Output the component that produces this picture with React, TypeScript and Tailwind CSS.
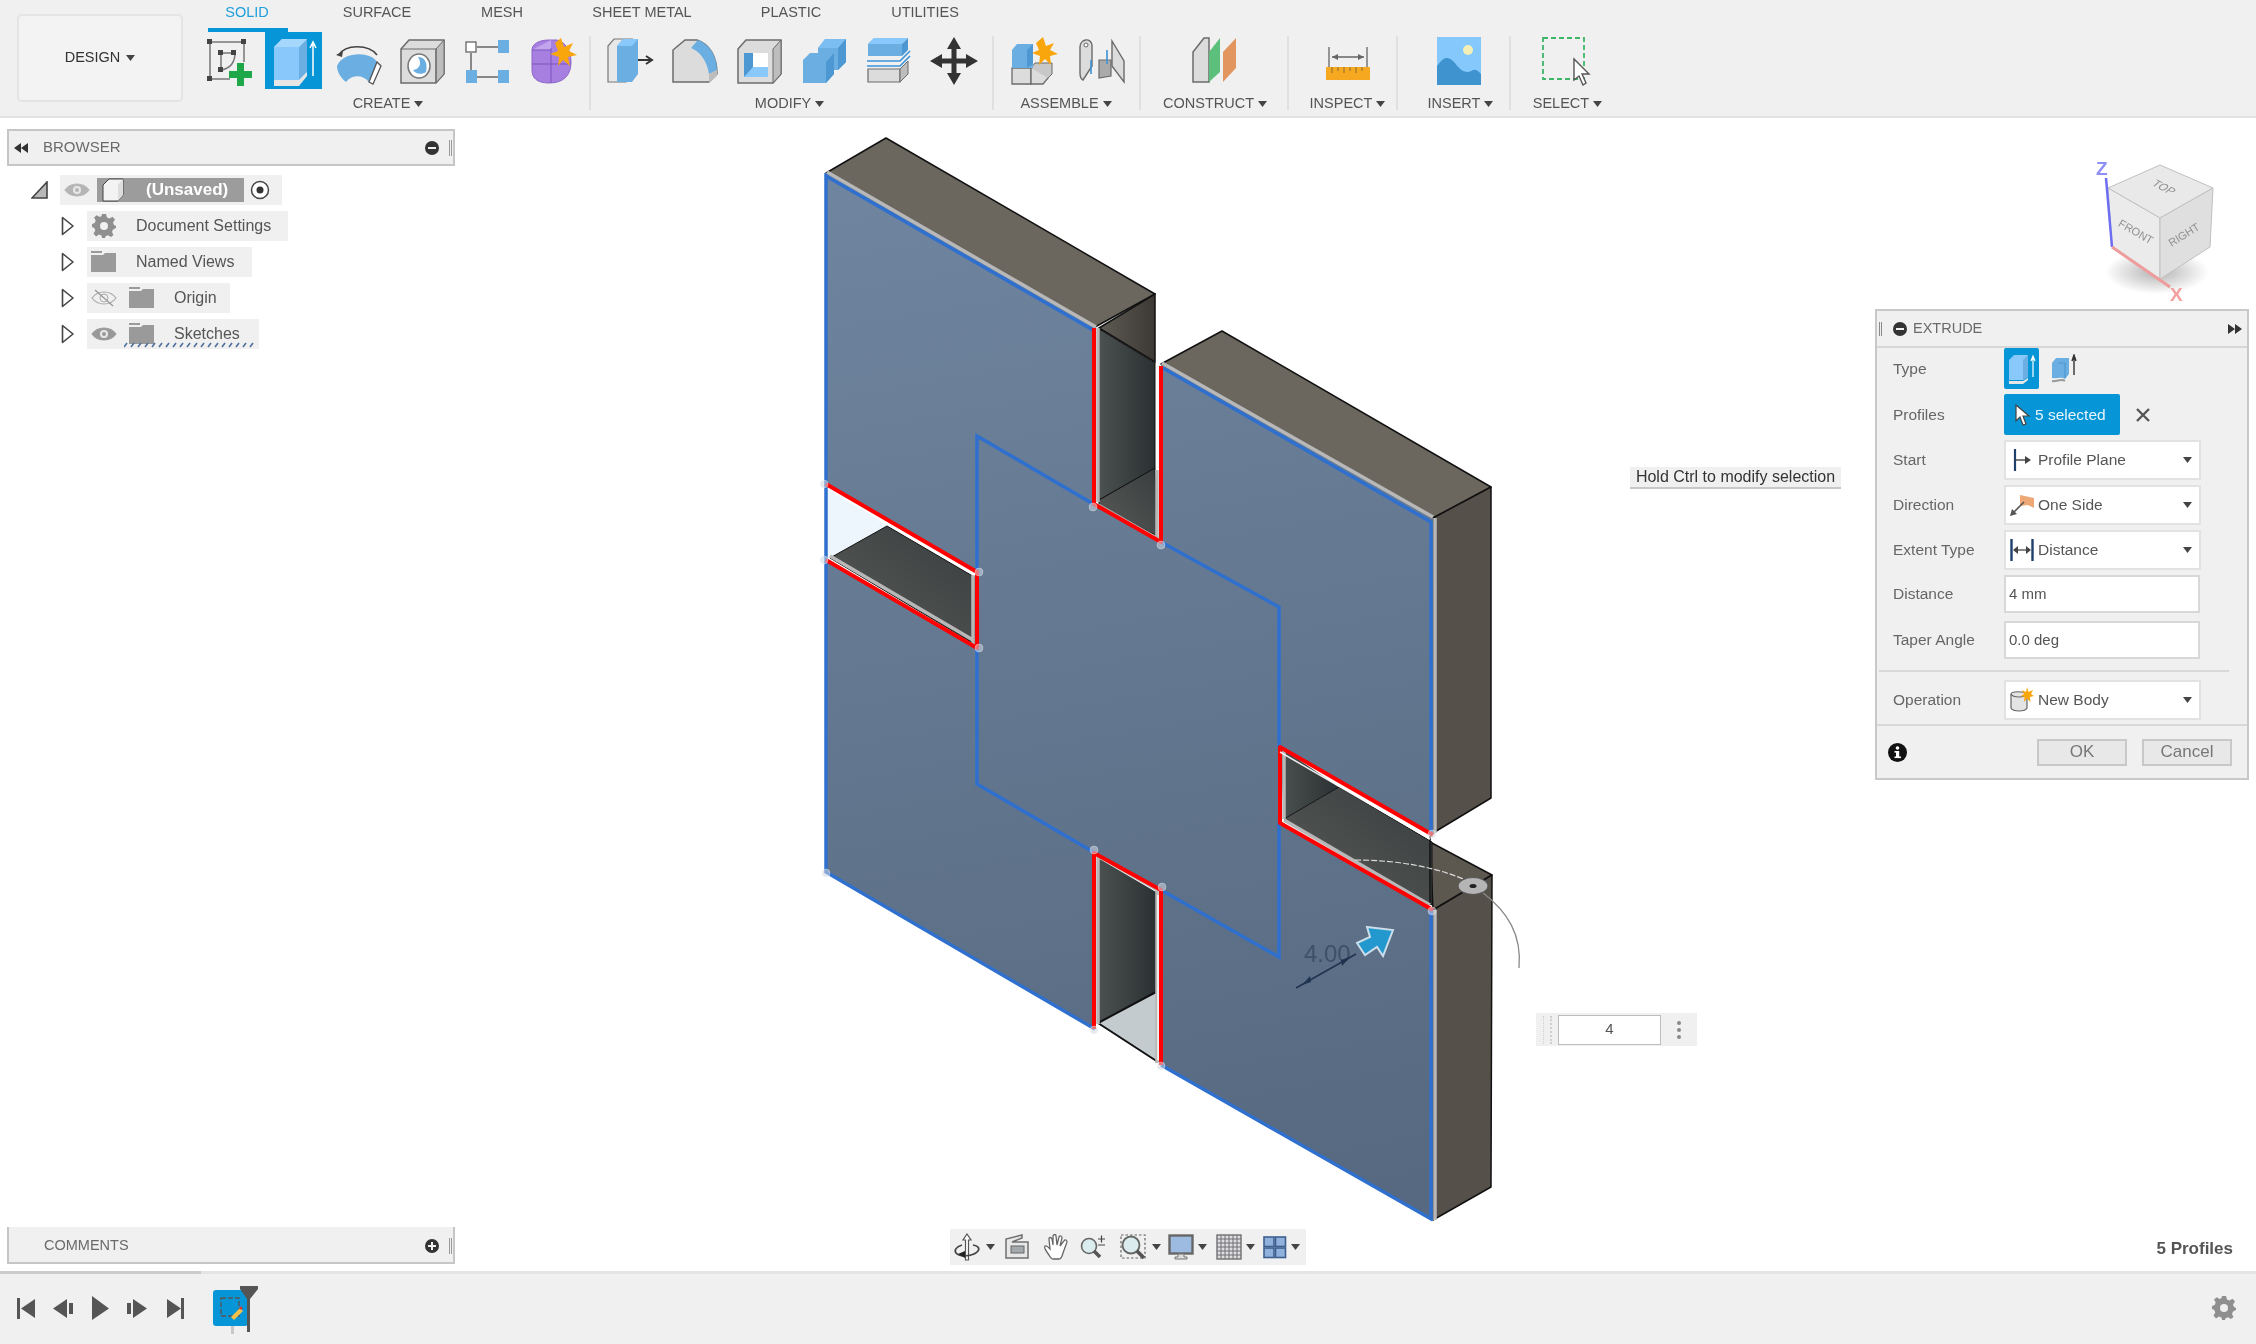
import * as React from "react";

function Caret({ className = "" }: { className?: string }) {
  return (
    <svg width="9" height="6" viewBox="0 0 9 6" className={className}>
      <path d="M0 0H9L4.5 6Z" fill="#444" />
    </svg>
  );
}

function Icon({ children, size = 50 }: { children: React.ReactNode; size?: number }) {
  return (
    <svg width={size} height={size} viewBox="0 0 50 50">
      {children}
    </svg>
  );
}

const BLUE = "#6aaee2";
const LIGHT = "#88c8fb";
const MID = "#4d98d2";
const GREY = "#dcdcdc";
const LINE = "#6b6b6b";

const IconSketch = () => (
  <Icon>
    <path d="M6 6H40M6 6V43M6 43H26M40 6V26" stroke="#777" strokeWidth="1.5" fill="none" />
    <path d="M17 17H30M17 17V33M31 17C31 26 26 32 18 34" stroke="#777" strokeWidth="1.5" fill="none" />
    {[[3, 3], [37, 3], [3, 40], [14, 14], [27, 14], [14, 31]].map(([x, y], i) => (
      <rect key={i} x={x} y={y} width="5" height="5" fill="#444" />
    ))}
    <path d="M33 27H40V35H48V42H40V50H33V42H25V35H33Z" fill="#1fa84a" />
  </Icon>
);

const IconExtrude = () => (
  <Icon>
    <path d="M5 11L13 3H38V38L30 46H5Z" fill={LIGHT} />
    <path d="M30 11L38 3V36L30 44Z" fill={BLUE} />
    <path d="M5 11L13 3H38L30 11Z" fill="#a6d8fd" />
    <path d="M5 44H30L38 36V40L30 50H5Z" fill="#e6e6e6" />
    <path d="M44 40V8M41 12L44 6L47 12" stroke="#fff" strokeWidth="1.5" fill="none" />
  </Icon>
);

const IconRevolve = () => (
  <Icon>
    <path d="M6 19C12 8 36 8 44 19" stroke="#444" strokeWidth="1.6" fill="none" />
    <path d="M3 19L10 15L9 21Z" fill="#444" />
    <path d="M4 30C10 15 38 15 44 26L36 46C30 39 20 38 13 46C8 42 4 36 4 30Z" fill={BLUE} />
    <path d="M44 26L48 30L40 48L36 46Z" fill="#fff" stroke="#555" strokeWidth="1.3" />
  </Icon>
);

const IconHole = () => (
  <Icon>
    <path d="M3 13L11 4H46V38L38 47H3Z" fill={GREY} stroke={LINE} strokeWidth="1.5" />
    <path d="M38 13L46 4V38L38 47Z" fill="#bdbdbd" stroke={LINE} strokeWidth="1" />
    <path d="M3 13H38V47" stroke={LINE} strokeWidth="1.2" fill="none" />
    <ellipse cx="21" cy="30" rx="11" ry="12" fill="#fff" stroke="#777" strokeWidth="1.5" />
    <path d="M20 21C27 21 30 27 28 36C24 39 17 38 15 34C22 33 24 27 20 21Z" fill={BLUE} />
  </Icon>
);

const IconPattern = () => (
  <Icon>
    <rect x="4" y="6" width="10" height="10" fill="#fff" stroke="#666" strokeWidth="1.3" />
    <rect x="36" y="4" width="11" height="13" fill={BLUE} />
    <rect x="4" y="34" width="11" height="13" fill={BLUE} />
    <rect x="36" y="34" width="11" height="13" fill={BLUE} />
    <path d="M15 11H36M9 17V34M15 41H36" stroke="#666" strokeWidth="1.5" />
  </Icon>
);

const IconForm = () => (
  <Icon>
    <path d="M5 14C5 8 12 4 22 4H30C38 6 44 14 44 26C44 40 36 47 22 47C10 47 5 42 5 34Z" fill="#a67fe0" stroke="#8d66c9" strokeWidth="1" />
    <path d="M5 14H24V4" fill="#c3a5ee" />
    <path d="M5 28H44M24 12V47M5 14H24" stroke="#7d55bd" strokeWidth="1" fill="none" />
    <path d="M34 2L37 11L46 7L42 15L50 19L41 21L43 30L36 24L31 30L32 21L23 18L31 15L28 7Z" fill="#f9a50c" />
  </Icon>
);

const IconPressPull = () => (
  <Icon>
    <path d="M2 46V10L8 3H26L20 10V46Z" fill="#e8e8e8" stroke="#777" strokeWidth="1.2" />
    <path d="M11 46V10L17 3H32V38L26 46Z" fill={BLUE} />
    <path d="M11 10L17 3H32L26 10Z" fill={LIGHT} />
    <path d="M32 24H44M40 20L46 24L40 28" stroke="#333" strokeWidth="2" fill="none" />
  </Icon>
);

const IconFillet = () => (
  <Icon>
    <path d="M2 46V14L14 4H26C38 8 46 20 46 38L38 46Z" fill={GREY} stroke={LINE} strokeWidth="1.5" />
    <path d="M20 12L27 4C38 8 46 20 46 34L38 38C36 26 30 16 20 12Z" fill={BLUE} />
    <path d="M38 38L46 34V40L38 47Z" fill="#bdbdbd" />
  </Icon>
);

const IconShell = () => (
  <Icon>
    <path d="M3 13L11 4H46V38L38 47H3Z" fill={GREY} stroke={LINE} strokeWidth="1.5" />
    <path d="M38 13L46 4V38L38 47Z" fill="#bdbdbd" stroke={LINE} strokeWidth="1" />
    <rect x="9" y="17" width="24" height="24" fill="#fff" />
    <path d="M9 17H18V31H33V41H9Z" fill={MID} />
    <path d="M18 31H33V41H9Z" fill={LIGHT} />
  </Icon>
);

const IconCombine = () => (
  <Icon>
    <path d="M18 12L25 3H46V26L38 34H34V38L26 47H3V24L10 17H18Z" fill={BLUE} />
    <path d="M18 12L25 3H46L38 12Z" fill={LIGHT} opacity="0.6" />
    <path d="M38 12L46 3V26L38 34Z" fill={MID} />
    <path d="M26 26L34 17V38L26 47Z" fill={MID} />
  </Icon>
);

const IconOffset = () => (
  <Icon>
    <path d="M4 8L10 2H42L38 8V20L4 20Z" fill={BLUE} />
    <path d="M4 8L10 2H44L38 8Z" fill={LIGHT} />
    <path d="M38 8L44 2V14L38 20Z" fill={MID} />
    <path d="M3 25H36L46 15" stroke="#3b93d8" strokeWidth="1.6" fill="none" />
    <path d="M3 30H36L46 20" stroke="#3b93d8" strokeWidth="1.6" fill="none" />
    <path d="M4 33H36V46H4Z" fill={GREY} stroke={LINE} strokeWidth="1.2" />
    <path d="M36 33L44 25V38L36 46Z" fill="#bdbdbd" stroke={LINE} strokeWidth="1" />
  </Icon>
);

const IconMove = () => (
  <Icon>
    <path d="M25 1L32 13H27.5V22.5H37V18L49 25L37 32V27.5H27.5V37H32L25 49L18 37H22.5V27.5H13V32L1 25L13 18V22.5H22.5V13H18Z" fill="#333" />
  </Icon>
);

const IconComponent = () => (
  <Icon>
    <path d="M3 32H22V48H3Z" fill={GREY} stroke={LINE} strokeWidth="1.3" />
    <path d="M22 32H39V42L34 48H22Z" fill={GREY} stroke={LINE} strokeWidth="1.3" />
    <path d="M22 32L26 27H43V38L39 42" fill="#c8c8c8" stroke={LINE} strokeWidth="1" />
    <path d="M3 14L8 8H24V32H3Z" fill={BLUE} />
    <path d="M18 14L24 8V28L18 32Z" fill={MID} />
    <path d="M34 1L37 10L45 7L41 14L49 18L41 20L42 29L36 23L30 29L31 20L23 17L30 14L27 7Z" fill="#f9a50c" />
  </Icon>
);

const IconJoint = () => (
  <Icon>
    <path d="M3 37V11C3 3 14 1 15 9V30L6 44C4 43 3 41 3 37Z" fill={GREY} stroke={LINE} strokeWidth="1.4" />
    <circle cx="9" cy="9" r="2" fill="#fff" stroke="#666" />
    <path d="M35 5L47 25V46L35 30Z" fill={GREY} stroke={LINE} strokeWidth="1.4" />
    <path d="M22 24L34 24V40L22 42Z" fill="#aaa" stroke={LINE} strokeWidth="1.2" />
    <path d="M14 24V38M30 14V28" stroke="#3b93d8" strokeWidth="1.6" />
  </Icon>
);

const IconConstruct = () => (
  <Icon>
    <path d="M3 46V16L14 2H19V46Z" fill={GREY} stroke={LINE} strokeWidth="1.5" />
    <path d="M19 46V16L30 2V36Z" fill="#5cc07c" />
    <path d="M33 46V16L46 2V32Z" fill="#e39560" />
  </Icon>
);

const IconInspect = () => (
  <Icon>
    <path d="M6 11V31M44 11V31M9 21H41" stroke="#666" strokeWidth="1.3" fill="none" />
    <path d="M9 21L15 18V24ZM41 21L35 18V24Z" fill="#666" />
    <rect x="3" y="31" width="44" height="13" fill="#f6a821" />
    <path d="M9 31V37M15 31V35M21 31V37M27 31V35M33 31V37M39 31V35" stroke="#8a6d2c" strokeWidth="1" />
  </Icon>
);

const IconInsert = () => (
  <Icon>
    <rect x="3" y="1" width="44" height="48" fill="#85c8fb" />
    <circle cx="34" cy="14" r="5" fill="#f3efb7" />
    <path d="M3 30C10 20 14 20 20 26C24 31 28 36 34 36C39 36 40 30 47 38V49H3Z" fill="#3f93ce" />
  </Icon>
);

const IconSelect = () => (
  <Icon>
    <rect x="2" y="2" width="41" height="41" fill="none" stroke="#3fb56a" strokeWidth="1.8" strokeDasharray="5 3" />
    <path d="M33 26V47L38 43L42 52L45 50L41 41H48Z" fill="#fff" stroke="#555" strokeWidth="1.4" transform="translate(0 -3)" />
  </Icon>
);

function Slot({ children, className = "w-[64.5px]" }: { children: React.ReactNode; className?: string }) {
  return <div className={`flex h-[57px] shrink-0 items-center justify-center ${className}`}>{children}</div>;
}

function Group({
  label,
  className,
  rowClass = "",
  labelClass = "",
  children,
  last,
}: {
  label: string;
  className: string;
  rowClass?: string;
  labelClass?: string;
  children: React.ReactNode;
  last?: boolean;
}) {
  return (
    <div className={`relative flex shrink-0 flex-col ${className}`}>
      <div className={`flex h-[57px] justify-center ${rowClass}`}>{children}</div>
      <div className={`mt-[5px] flex h-[20px] items-center justify-center gap-[4px] text-[14.5px] text-[#555] ${labelClass}`}>
        {label}
        <Caret />
      </div>
      {!last && <div className="absolute right-0 top-[4px] h-[74px] w-[2px] bg-[#e0e0e0]" />}
    </div>
  );
}

function Toolbar() {
  const tabs = [
    ["SOLID", "w-[102px] text-[#1f9fdc]"],
    ["SURFACE", "w-[158px] text-[#555]"],
    ["MESH", "w-[92px] text-[#555]"],
    ["SHEET METAL", "w-[188px] text-[#555]"],
    ["PLASTIC", "w-[110px] text-[#555]"],
    ["UTILITIES", "w-[158px] text-[#555]"],
  ];
  return (
    <header className="flex h-[118px] shrink-0 border-b-2 border-[#e2e2e2] bg-[#f0f0f0]">
      <div className="ml-[17px] mt-[14px] flex h-[88px] w-[166px] items-center justify-center gap-[6px] rounded-[5px] border-2 border-[#e4e4e4] bg-[#f3f3f3] text-[14.5px] text-[#333]">
        DESIGN
        <Caret />
      </div>
      <div className="ml-[13px] flex flex-col">
        <div className="flex h-[28px] items-start pt-[2px] text-[14.5px] leading-[20px]">
          {tabs.map(([t, c]) => (
            <div key={t} className={`text-center ${c}`}>
              {t}
            </div>
          ))}
        </div>
        <div className="ml-[12px] h-[4px] w-[80px] bg-[#0696d7]" />
        <div className="flex">
          <Group label="CREATE" className="w-[395px]" rowClass="pr-[6px]" labelClass="pr-[11px]">
            <Slot><IconSketch /></Slot>
            <Slot>
              <div className="flex h-[57px] w-[57px] items-center justify-center bg-[#0696d7]"><IconExtrude /></div>
            </Slot>
            <Slot><IconRevolve /></Slot>
            <Slot><IconHole /></Slot>
            <Slot><IconPattern /></Slot>
            <Slot><IconForm /></Slot>
          </Group>
          <Group label="MODIFY" className="w-[403px]" labelClass="pr-[6px]">
            <Slot><IconPressPull /></Slot>
            <Slot><IconFillet /></Slot>
            <Slot><IconShell /></Slot>
            <Slot><IconCombine /></Slot>
            <Slot><IconOffset /></Slot>
            <Slot><IconMove /></Slot>
          </Group>
          <Group label="ASSEMBLE" className="w-[147px]" labelClass="pr-[3px]">
            <Slot className="w-[68px]"><IconComponent /></Slot>
            <Slot className="w-[68px]"><IconJoint /></Slot>
          </Group>
          <Group label="CONSTRUCT" className="w-[148px]">
            <Slot><IconConstruct /></Slot>
          </Group>
          <Group label="INSPECT" className="w-[109px]" labelClass="pl-[8px]">
            <Slot className="w-[64.5px] translate-x-[4px]"><IconInspect /></Slot>
          </Group>
          <Group label="INSERT" className="w-[113px]" labelClass="pl-[12px]">
            <Slot className="w-[64.5px] translate-x-[4px]"><IconInsert /></Slot>
          </Group>
          <Group label="SELECT" className="w-[109px]" labelClass="pl-[4px]" last>
            <Slot><IconSelect /></Slot>
          </Group>
        </div>
      </div>
    </header>
  );
}

function Eye({ off, faint }: { off?: boolean; faint?: boolean }) {
  const c = faint ? "#b5b5b5" : "#999";
  return (
    <svg width="26" height="20" viewBox="0 0 26 20">
      <path d="M1 10C7 2 19 2 25 10C19 18 7 18 1 10Z" fill={off ? "none" : c} stroke={off ? "#aaa" : c} strokeWidth="1.2" />
      <circle cx="13" cy="10" r="4" fill={off ? "none" : "#e8e8e8"} stroke={off ? "#aaa" : "none"} />
      {!off && <circle cx="13" cy="10" r="2" fill={c} />}
      {off && <path d="M4 2L22 18" stroke="#999" strokeWidth="1.3" />}
    </svg>
  );
}

function Folder() {
  return (
    <svg width="25" height="22" viewBox="0 0 25 22">
      <path d="M0 0H11V2H0ZM0 4H12L14 2H25V21H0Z" fill="#9a9a9a" />
    </svg>
  );
}

function Gear() {
  return (
    <svg width="24" height="24" viewBox="0 0 24 24">
      <path
        d="M10 0H14L15 3.5L17.5 4.6L20.5 2.7L23 5.5L21 8.5L22 11L24 12V14L21 15.5L20 18L21.5 21L19 23L16 21.3L13.5 22.3L13 24H10L9.5 21.5L7 20.5L4 22.5L1.5 19.5L3.3 16.5L2.3 14L0 13V10L2.7 9L3.7 6.5L2 3.5L4.8 1.2L7.7 3L9.5 2Z"
        fill="#8f8f8f"
      />
      <circle cx="12" cy="12" r="4" fill="#f0f0f0" />
    </svg>
  );
}

function TreeArrow() {
  return (
    <svg width="14" height="20" viewBox="0 0 14 20" className="shrink-0">
      <path d="M1.5 1.5L12 10L1.5 18.5Z" fill="#fff" stroke="#444" strokeWidth="1.6" strokeLinejoin="round" />
    </svg>
  );
}

function TreeRow({ className, textClass, children, label }: { className: string; textClass: string; children: React.ReactNode; label: string }) {
  return (
    <div className="flex h-[36px] items-center">
      <div className="ml-[61px] w-[26px]"><TreeArrow /></div>
      <div className={`relative flex h-[30px] items-center bg-[#f0f0f0] ${className}`}>
        {children}
        <span className={`text-[16px] text-[#555] ${textClass}`}>{label}</span>
      </div>
    </div>
  );
}

function Browser() {
  return (
    <div className="absolute left-[7px] top-[11px] w-[448px]">
      <div className="flex h-[37px] items-center border-2 border-[#c6c6c6] bg-[#f0f0f0]">
        <svg width="16" height="10" viewBox="0 0 16 10" className="ml-[5px]">
          <path d="M0 5L7 0V10ZM7 5L14 0V10Z" fill="#333" />
        </svg>
        <span className="ml-[13px] text-[15px] text-[#6a6a6a]">BROWSER</span>
        <div className="ml-auto mr-[1px] flex items-center gap-[10px]">
          <svg width="14" height="14" viewBox="0 0 14 14">
            <circle cx="7" cy="7" r="7" fill="#333" />
            <rect x="3" y="6" width="8" height="2" fill="#f0f0f0" />
          </svg>
          <div className="h-[16px] w-[3px] border-x border-[#9a9a9a]" />
        </div>
      </div>
      <div className="ml-[24px] mt-[9px] flex h-[30px] items-center">
        <svg width="17" height="18" viewBox="0 0 17 18">
          <path d="M1 17L16 1V17Z" fill="#b9b9b9" stroke="#444" strokeWidth="1.6" />
        </svg>
        <div className="ml-[12px] flex h-[30px] w-[222px] items-center bg-[#f0f0f0]">
          <div className="ml-[4px]"><Eye faint /></div>
          <div className="relative ml-[7px] flex h-[24px] w-[147px] items-center bg-[#9c9c9c]">
            <svg width="24" height="24" viewBox="0 0 24 24" className="absolute left-[4px] top-0">
              <path d="M2 23V7L8 1H22V17L17 23Z" fill="#f3f3f3" stroke="#444" strokeWidth="1" />
              <path d="M17 7L22 1V17L17 23Z" fill="#ddd" />
            </svg>
            <span className="ml-[49px] text-[17px] font-bold text-white">(Unsaved)</span>
          </div>
          <svg width="20" height="20" viewBox="0 0 20 20" className="ml-[6px]">
            <circle cx="10" cy="10" r="8.5" fill="#fff" stroke="#444" strokeWidth="1.5" />
            <circle cx="10" cy="10" r="3.5" fill="#333" />
          </svg>
        </div>
      </div>
      <div className="mt-[3px] -translate-x-[7px]">
        <TreeRow className="w-[201px]" textClass="ml-[20px]" label="Document Settings">
          <div className="ml-[5px]"><Gear /></div>
        </TreeRow>
        <TreeRow className="w-[165px]" textClass="ml-[20px]" label="Named Views">
          <div className="ml-[4px]"><Folder /></div>
        </TreeRow>
        <TreeRow className="w-[143px]" textClass="ml-[20px]" label="Origin">
          <div className="ml-[4px]"><Eye off /></div>
          <div className="ml-[12px]"><Folder /></div>
        </TreeRow>
        <TreeRow className="w-[172px]" textClass="ml-[20px]" label="Sketches">
          <div className="ml-[4px]"><Eye /></div>
          <div className="ml-[12px]"><Folder /></div>
          <svg width="132" height="6" viewBox="0 0 132 6" className="absolute left-[37px] top-[23px]">
            <path d="M0 5L3 1M7 5L10 1M14 5L17 1M21 5L24 1M28 5L31 1M35 5L38 1M42 5L45 1M49 5L52 1M56 5L59 1M63 5L66 1M70 5L73 1M77 5L80 1M84 5L87 1M91 5L94 1M98 5L101 1M105 5L108 1M112 5L115 1M119 5L122 1M126 5L129 1" stroke="#4e6f9e" strokeWidth="1.6" />
          </svg>
        </TreeRow>
      </div>
    </div>
  );
}

function Comments() {
  return (
    <div className="absolute bottom-[7px] left-[7px] flex h-[37px] w-[448px] items-center border-x-2 border-b-2 border-[#c6c6c6] bg-[#f0f0f0]">
      <span className="ml-[35px] pt-[2px] text-[14.5px] text-[#6a6a6a]">COMMENTS</span>
      <div className="ml-auto mr-[1px] flex items-center gap-[10px] pt-[2px]">
        <svg width="14" height="14" viewBox="0 0 14 14">
          <circle cx="7" cy="7" r="7" fill="#333" />
          <path d="M3 7H11M7 3V11" stroke="#f0f0f0" strokeWidth="2" />
        </svg>
        <div className="h-[16px] w-[3px] border-x border-[#9a9a9a]" />
      </div>
    </div>
  );
}

function Row({ label, children, className = "h-[40px]" }: { label: string; children: React.ReactNode; className?: string }) {
  return (
    <div className={`flex items-center ${className}`}>
      <div className="w-[127px] shrink-0 pl-[16px] text-[15.5px] text-[#666]">{label}</div>
      {children}
    </div>
  );
}

function Select({ icon, value }: { icon: React.ReactNode; value: string }) {
  return (
    <div className="flex h-[40px] w-[197px] items-center border-2 border-[#e2e2e2] bg-white">
      <div className="flex w-[32px] shrink-0 justify-center">{icon}</div>
      <span className="text-[15.5px] text-[#555]">{value}</span>
      <Caret className="ml-auto mr-[7px]" />
    </div>
  );
}

function TextField({ value }: { value: string }) {
  return (
    <div className="flex h-[38px] w-[196px] items-center border-2 border-[#d8d8d8] bg-white pl-[3px] text-[15px] text-[#555]">{value}</div>
  );
}

function Extrude() {
  return (
    <div className="absolute right-[7px] top-[191px] w-[374px] border-2 border-[#c8c8c8] bg-[#f0f0f0]">
      <div className="flex h-[37px] items-center border-b-2 border-[#d6d6d6]">
        <div className="ml-[2px] h-[14px] w-[3px] border-x border-[#8a8a8a]" />
        <svg width="14" height="14" viewBox="0 0 14 14" className="ml-[11px]">
          <circle cx="7" cy="7" r="7" fill="#333" />
          <rect x="3" y="6" width="8" height="2" fill="#f0f0f0" />
        </svg>
        <span className="ml-[6px] text-[14.5px] text-[#6a6a6a]">EXTRUDE</span>
        <svg width="15" height="10" viewBox="0 0 15 10" className="ml-auto mr-[4px]">
          <path d="M0 0L7 5L0 10ZM7 0L14 5L7 10Z" fill="#333" />
        </svg>
      </div>
      <div className="flex flex-col gap-[5px]">
        <Row label="Type" className="h-[41px]">
          <div className="flex h-[41px] w-[35px] items-center justify-center rounded-[2px] bg-[#0696d7]">
            <svg width="30" height="32" viewBox="0 0 30 32">
              <path d="M2 7L7 2H21V24L16 27H2Z" fill="#88c8fb" />
              <path d="M16 7L21 2V24L16 27Z" fill="#6aaee2" />
              <path d="M2 28H16L21 25V27L16 31H2Z" fill="#e6e6e6" />
              <path d="M26 24V5M24 8L26 3L28 8" stroke="#fff" strokeWidth="1.2" fill="none" />
            </svg>
          </div>
          <svg width="26" height="30" viewBox="0 0 26 30" className="ml-[12px]">
            <path d="M1 9L5 4H18V20L14 25C10 22 6 25 1 24Z" fill="#6aaee2" />
            <path d="M7 9H14V24" stroke="#4d98d2" strokeWidth="1.2" fill="none" />
            <path d="M1 27C6 28 10 24 14 27" stroke="#999" strokeWidth="2" fill="none" />
            <path d="M23 21V3M21 7L23 1L25 7" stroke="#333" strokeWidth="1.4" fill="none" />
          </svg>
        </Row>
        <Row label="Profiles" className="h-[41px]">
          <div className="flex h-[41px] w-[116px] items-center rounded-[2px] bg-[#0696d7]">
            <svg width="16" height="22" viewBox="0 0 16 22" className="ml-[11px]">
              <path d="M1 1V17L5 13L8 21L11 20L8 12H14Z" fill="#fff" stroke="#444" strokeWidth="1.2" />
            </svg>
            <span className="ml-[4px] text-[15.5px] text-[#e8f4fb]">5 selected</span>
          </div>
          <svg width="14" height="14" viewBox="0 0 14 14" className="ml-[16px]">
            <path d="M1 1L13 13M13 1L1 13" stroke="#555" strokeWidth="2.4" />
          </svg>
        </Row>
        <Row label="Start">
          <Select
            value="Profile Plane"
            icon={
              <svg width="18" height="24" viewBox="0 0 18 24">
                <path d="M2 1V23" stroke="#1f3f6e" strokeWidth="2.2" />
                <path d="M2 12H13" stroke="#444" strokeWidth="1.4" />
                <path d="M12 8L18 12L12 16Z" fill="#444" />
              </svg>
            }
          />
        </Row>
        <Row label="Direction">
          <Select
            value="One Side"
            icon={
              <svg width="24" height="22" viewBox="0 0 24 22">
                <path d="M10 1L24 4V14L18 11L10 12Z" fill="#eda875" />
                <path d="M1 21L14 8" stroke="#555" strokeWidth="1.6" />
                <path d="M0 22L2 15L7 20Z" fill="#555" />
              </svg>
            }
          />
        </Row>
        <Row label="Extent Type">
          <Select
            value="Distance"
            icon={
              <svg width="24" height="24" viewBox="0 0 24 24">
                <path d="M1.5 1V23M22.5 1V23" stroke="#1f3f6e" strokeWidth="2.4" />
                <path d="M4 12H20" stroke="#444" strokeWidth="1.3" />
                <path d="M3 12L8 8V16ZM21 12L16 8V16Z" fill="#444" />
              </svg>
            }
          />
        </Row>
        <Row label="Distance" className="h-[38px]"><TextField value="4 mm" /></Row>
        <Row label="Taper Angle" className="mt-[3px] h-[38px]"><TextField value="0.0 deg" /></Row>
      </div>
      <div className="ml-[2px] mt-[11px] h-[2px] w-[350px] bg-[#d8d8d8]" />
      <Row label="Operation" className="mt-[8px] h-[40px]">
        <Select
          value="New Body"
          icon={
            <svg width="24" height="26" viewBox="0 0 24 26">
              <path d="M1 7C1 4 15 4 17 7V21C15 25 3 25 1 21Z" fill="#e4e4e4" stroke="#666" strokeWidth="1.2" />
              <path d="M1 7C3 11 15 11 17 7" stroke="#666" strokeWidth="1.2" fill="none" />
              <path d="M17 0L18.5 5L23 3L21 7L24 9L20 10L20.5 15L17 11.5L14 15L14.5 10L11 9L14 7L12 3L16 5Z" fill="#f9a50c" />
            </svg>
          }
        />
      </Row>
      <div className="mt-[4px] h-[2px] bg-[#d8d8d8]" />
      <div className="relative flex h-[52px] items-center">
        <svg width="19" height="19" viewBox="0 0 19 19" className="ml-[11px]">
          <circle cx="9.5" cy="9.5" r="9.5" fill="#111" />
          <rect x="8" y="8" width="3.2" height="7" fill="#fff" />
          <rect x="6.5" y="8" width="3" height="1.6" fill="#fff" />
          <rect x="6.5" y="13.5" width="6.5" height="1.6" fill="#fff" />
          <circle cx="9.5" cy="5" r="1.8" fill="#fff" />
        </svg>
        <div className="ml-auto mr-[15px] flex gap-[15px]">
          {["OK", "Cancel"].map((t) => (
            <div key={t} className="flex h-[27px] w-[90px] items-center justify-center border-2 border-[#c8c8c8] bg-[#e8e8e8] text-[17px] text-[#777]">
              {t}
            </div>
          ))}
        </div>
      </div>
    </div>
  );
}

function NavBar() {
  return (
    <div className="absolute bottom-[6px] left-[950px] flex h-[36px] w-[356px] items-center bg-[#f0f0f0]">
      <svg width="28" height="28" viewBox="0 0 28 28" className="ml-[3px]">
        <path d="M14 1L18 7H15.5V27H12.5V7H10Z" fill="#fff" stroke="#555" strokeWidth="1.2" />
        <path d="M9 12C3 14 1 17 3 20C6 24 20 24 25 18C27 15 25 13 20 12" stroke="#444" strokeWidth="1.7" fill="none" />
        <path d="M5 21L12 18V25Z" fill="#222" />
      </svg>
      <Caret className="ml-[5px]" />
      <svg width="26" height="26" viewBox="0 0 26 26" className="ml-[9px]">
        <path d="M2 10V5L18 1V4L8 8H24V24H2Z" fill="#e8e8e8" stroke="#6f6f6f" strokeWidth="1.5" />
        <rect x="7" y="12" width="13" height="7" fill="#a3a9ad" stroke="#666" />
      </svg>
      <svg width="26" height="26" viewBox="0 0 26 26" className="ml-[13px]">
        <path d="M6 21C3 17 1 13 2 12C4 11 6 14 7 15L6 5C6 3 8 3 9 5L10 11L10 2C11 0 13 0 13 2L14 11L16 3C17 1 19 2 19 4L17 12L21 7C22 5 24 6 24 8L20 19C19 23 18 25 16 25H10C8 25 7 23 6 21Z" fill="#fff" stroke="#666" strokeWidth="1.3" />
      </svg>
      <svg width="26" height="26" viewBox="0 0 26 26" className="ml-[11px]">
        <circle cx="9" cy="12" r="7.5" fill="#dbecef" stroke="#666" strokeWidth="1.6" />
        <path d="M14 17L20 23" stroke="#555" strokeWidth="3.5" />
        <path d="M18 5H25M21.5 1.5V8.5M18 11H25" stroke="#444" strokeWidth="1.2" />
      </svg>
      <svg width="26" height="26" viewBox="0 0 26 26" className="ml-[14px]">
        <rect x="1" y="1" width="24" height="23" fill="none" stroke="#666" strokeWidth="1.2" strokeDasharray="2.5 2" />
        <circle cx="11" cy="11" r="8.5" fill="#dbecef" stroke="#666" strokeWidth="1.8" />
        <path d="M17 17L24 24" stroke="#555" strokeWidth="3.8" />
      </svg>
      <Caret className="ml-[6px]" />
      <svg width="26" height="26" viewBox="0 0 26 26" className="ml-[7px]">
        <rect x="1.5" y="1.5" width="23" height="18" fill="#9dbbe0" stroke="#666" strokeWidth="2.4" />
        <path d="M10 20H16V23H19V25H7V23H10Z" fill="#ddd" stroke="#777" strokeWidth="1" />
      </svg>
      <Caret className="ml-[4px]" />
      <svg width="26" height="26" viewBox="0 0 26 26" className="ml-[9px]">
        <rect x="1" y="1" width="24" height="24" fill="#ddd" stroke="#666" strokeWidth="1.3" />
        <path d="M5 1V25M9 1V25M13 1V25M17 1V25M21 1V25M1 5H25M1 9H25M1 13H25M1 17H25M1 21H25" stroke="#6f6f78" strokeWidth="1" />
      </svg>
      <Caret className="ml-[4px]" />
      <svg width="24" height="24" viewBox="0 0 24 24" className="ml-[8px]">
        <rect x="1" y="2" width="10" height="9.5" fill="#8fb1dc" stroke="#3f5f90" strokeWidth="1.6" />
        <rect x="12.5" y="2" width="10" height="9.5" fill="#8fb1dc" stroke="#3f5f90" strokeWidth="1.6" />
        <rect x="1" y="13" width="10" height="9.5" fill="#8fb1dc" stroke="#3f5f90" strokeWidth="1.6" />
        <rect x="12.5" y="13" width="10" height="9.5" fill="#8fb1dc" stroke="#3f5f90" strokeWidth="1.6" />
      </svg>
      <Caret className="ml-[4px]" />
    </div>
  );
}

function Dimension() {
  return (
    <div className="absolute left-[1536px] top-[895px] flex h-[33px] w-[161px] items-center bg-[#f0f0f0]">
      <div className="ml-[7px] h-[28px] w-[9px] border-r-2 border-l border-dotted border-[#cfcfcf]" />
      <div className="ml-[6px] flex h-[30px] w-[103px] items-center justify-center border border-[#bdbdbd] bg-white text-[15px] text-[#555]">4</div>
      <div className="ml-[16px] flex flex-col gap-[3px]">
        <div className="h-[4px] w-[4px] rounded-full bg-[#888]" />
        <div className="h-[4px] w-[4px] rounded-full bg-[#888]" />
        <div className="h-[4px] w-[4px] rounded-full bg-[#888]" />
      </div>
    </div>
  );
}

const FACE =
  "826,173 1095,327 1095,505 1161,542 1161,364 1433,518 1433,835 1280,747 1280,823 1433,910 1433,1220 1161,1065 1161,890 1095,853 1095,1029 826,872 826,560 977,648 977,572 826,484";

function Model() {
  return (
    <svg viewBox="0 118 2256 1153" className="absolute inset-0 h-full w-full">
      <defs>
        <linearGradient id="face" gradientUnits="userSpaceOnUse" x1="1000" y1="173" x2="1180" y2="1220">
          <stop offset="0" stopColor="#6f849e" />
          <stop offset="1" stopColor="#566980" />
        </linearGradient>
        <linearGradient id="wall" x1="0" y1="0" x2="1" y2="0">
          <stop offset="0" stopColor="#4b5050" />
          <stop offset="1" stopColor="#2b3032" />
        </linearGradient>
        <linearGradient id="wedge" x1="0" y1="0" x2="1" y2="0">
          <stop offset="0" stopColor="#5f5b54" />
          <stop offset="1" stopColor="#3c3935" />
        </linearGradient>
        <linearGradient id="floor" gradientUnits="objectBoundingBox" x1="0" y1="1" x2="1" y2="0">
          <stop offset="0" stopColor="#585b58" />
          <stop offset="1" stopColor="#393d3e" />
        </linearGradient>
        <radialGradient id="shadow">
          <stop offset="0" stopColor="#000" stopOpacity="0.3" />
          <stop offset="1" stopColor="#000" stopOpacity="0" />
        </radialGradient>
      </defs>

      {/* top and side walls of the part */}
      <g stroke="#111" strokeWidth="1.5" strokeLinejoin="round">
        <polygon points="826,173 886,138 1155,294 1095,327" fill="#6b675f" />
        <polygon points="1161,364 1222,331 1491,487 1433,518" fill="#6b675f" />
        <polygon points="1433,518 1491,487 1491,798 1433,833" fill="#55514a" />
        <polygon points="1430,842 1492,875 1433,910" fill="#5c5850" />
        <polygon points="1433,910 1492,875 1491,1187 1433,1220" fill="#55514a" />
      </g>

      {/* notch interiors */}
      <polygon points="826,484 887,526 826,560" fill="#eef6fd" />
      <path d="M826 484V560" stroke="#111" strokeWidth="2" />
      <polygon points="830,558 887,526 976,578 976,645" fill="url(#floor)" stroke="#111" strokeWidth="1" />
      <polygon points="1099,328 1155,294 1155,362" fill="url(#wedge)" stroke="#111" strokeWidth="1.5" />
      <polygon points="1099,329 1155,363 1155,468 1099,500" fill="url(#wall)" stroke="#111" strokeWidth="1" />
      <polygon points="1099,500 1155,468 1157,536 1099,505" fill="url(#floor)" stroke="#111" strokeWidth="1" />
      <polygon points="1280,747 1339,787 1284,819" fill="url(#wall)" />
      <polygon points="1284,819 1339,787 1432,842 1432,905" fill="url(#floor)" stroke="#111" strokeWidth="1" />
      <path d="M1430 836V905" stroke="#111" strokeWidth="1.5" />
      <polygon points="1098,858 1156,892 1156,992 1098,1023" fill="url(#wall)" />
      <polygon points="1098,1023 1156,992 1158,1062" fill="#c4cbcf" />
      <path d="M1098 1023L1158 1062M1098 1023L1156 992" stroke="#111" strokeWidth="2" />

      <polygon points={FACE} fill="url(#face)" />

      {/* sketch profile lines */}
      <g stroke="#2f70cf" strokeWidth="3.5" fill="none">
        <path d="M826 173V872L1095 1029M1161 1065L1433 1220" />
        <path d="M977 572V436L1095 505M1161 542L1279 607V747M1279 823V957L1161 890M1095 853L977 784V648" />
        <path d="M826 176L1093 330M1163 368L1431 522V835M1431 910V1220" />
      </g>
      <g stroke="#b8b8b8" strokeWidth="3.5" fill="none">
        <path d="M827 172L1096 327M1162 363L1433 517M1435 518V833M1435 910V1220" />
        <path d="M1098 328V502M1157 470V538M1098 505L1158 539M830 556L973 640M973 575V645M1284 749V819M1284 820L1430 905M1098 856V1024M1097 855L1156 889M1157 890V1063" />
      </g>
      <path d="M1158 366V468" stroke="#f4f4f4" strokeWidth="3" fill="none" />

      {/* selected profile edges */}
      <g stroke="#ff0000" strokeWidth="4" fill="none" strokeLinejoin="round">
        <path d="M1094 328V504L1161 542V366" />
        <path d="M826 484L977 572V648L826 560" />
        <path d="M1433 835L1280 747V823L1433 910" />
        <path d="M1161 1065V890L1094 853V1029" />
      </g>
      <g stroke="#fff" strokeWidth="1.5" fill="none" opacity="0.9">
        <path d="M828 489L975 575M1280 752L1430 839M1158 895V1060" />
      </g>
      <g fill="#cfd8e2" fillOpacity="0.55" stroke="#fff" strokeOpacity="0.6" strokeWidth="0.5">
        {[[824,484],[824,560],[979,572],[979,648],[1093,507],[1161,545],[1094,850],[1162,887],[1432,834],[1432,911],[826,873],[1094,1030],[1161,1066]].map(([x,y],i)=>(
          <circle key={i} cx={x} cy={y} r="4" />
        ))}
      </g>

      {/* distance manipulator */}
      <path d="M1355 860C1400 860 1440 868 1470 882" stroke="#dcdcdc" strokeWidth="1.2" strokeDasharray="6 2" fill="none" />
      <path d="M1482 892C1508 912 1522 935 1519 968" stroke="#888" strokeWidth="1.3" fill="none" />
      <ellipse cx="1473" cy="886" rx="15" ry="8.5" fill="#b5b5b5" stroke="#555" strokeWidth="1.2" />
      <ellipse cx="1473" cy="886" rx="3.5" ry="2" fill="#222" />
      <text x="1304" y="962" fontFamily="Liberation Sans, sans-serif" fontSize="24" fill="#3e5068">4.00</text>
      <path d="M1296 988L1356 954" stroke="#1f3350" strokeWidth="1.5" />
      <path d="M1302 985L1310 976L1311 982ZM1350 957L1342 966L1341 960Z" fill="#1f3350" />
      <polygon points="1367,927 1393,930 1383,956 1377,947 1365,955 1357,943 1370,937" fill="#2398cf" stroke="#cbdde8" strokeWidth="2" />

      {/* view cube */}
      <ellipse cx="2157" cy="272" rx="52" ry="22" fill="url(#shadow)" />
      <polygon points="2160,165 2213,188 2160,218 2108,188" fill="#e9e9e9" stroke="#c0c0c0" strokeWidth="1" />
      <polygon points="2108,188 2160,218 2160,279 2112,247" fill="#ebebeb" stroke="#c0c0c0" strokeWidth="1" />
      <polygon points="2160,218 2213,188 2210,247 2160,279" fill="#dfdfdf" stroke="#c0c0c0" strokeWidth="1" />
      <g fontFamily="Liberation Sans, sans-serif" fontSize="11" fill="#8f8f8f" textAnchor="middle">
        <text transform="translate(2161 190) rotate(28) skewX(-20)">TOP</text>
        <text transform="translate(2134 235) rotate(30)">FRONT</text>
        <text transform="translate(2186 238) rotate(-32)">RIGHT</text>
      </g>
      <path d="M2112 247L2106 178" stroke="#6d6df2" strokeWidth="2.5" />
      <path d="M2112 247L2170 287" stroke="#ee9c9c" strokeWidth="3" />
      <text x="2096" y="175" fontFamily="Liberation Sans, sans-serif" fontSize="19" fontWeight="700" fill="#8f8ff5">Z</text>
      <text x="2170" y="301" fontFamily="Liberation Sans, sans-serif" fontSize="19" fontWeight="700" fill="#f5a0a0">X</text>
    </svg>
  );
}

function Timeline() {
  return (
    <footer className="relative flex h-[73px] shrink-0 flex-col bg-[#f0f0f0]">
      <div className="h-[3px] bg-[#e4e4e4]">
        <div className="h-[3px] w-[201px] bg-[#cbcbcb]" />
      </div>
      <div className="flex flex-1 items-center pb-[3px]">
        <svg width="170" height="26" viewBox="0 0 170 26" className="ml-[17px]">
          <path d="M0 3H3V24H0ZM18 4V23L4 13.5Z" fill="#555" />
          <path d="M36 13.5L50 4V23ZM52 8H56V19H52Z" fill="#555" />
          <path d="M75 1L92 13.5L75 25Z" fill="#555" />
          <path d="M110 8H114V19H110ZM116 4L130 13.5L116 23Z" fill="#555" />
          <path d="M150 4L164 13.5L150 23ZM164 3H167V24H164Z" fill="#555" />
        </svg>
        <div className="relative ml-[26px] h-[36px] w-[35px] rounded-[3px] bg-[#0696d7]">
          <svg width="35" height="36" viewBox="0 0 35 36">
            <rect x="8" y="8" width="18" height="18" fill="none" stroke="#555" strokeWidth="1.4" strokeDasharray="5 2" />
            <path d="M18 27L27 18L30 21L21 30Z" fill="#f3c04a" />
            <circle cx="28" cy="18" r="1.6" fill="#d33" />
          </svg>
          <div className="absolute left-[18px] top-full h-[8px] w-[3px] bg-[#c8c8c8]" />
        </div>
      </div>
      <svg width="20" height="48" viewBox="0 0 20 48" className="absolute left-[239px] top-[14px]">
        <path d="M1 1H19V4L11 14V47H8V14L1 4Z" fill="#555" />
      </svg>
      <svg width="24" height="24" viewBox="0 0 24 24" className="absolute left-[2212px] top-[25px]">
        <path
          d="M10 0H14L15 3.5L17.5 4.6L20.5 2.7L23 5.5L21 8.5L22 11L24 12V14L21 15.5L20 18L21.5 21L19 23L16 21.3L13.5 22.3L13 24H10L9.5 21.5L7 20.5L4 22.5L1.5 19.5L3.3 16.5L2.3 14L0 13V10L2.7 9L3.7 6.5L2 3.5L4.8 1.2L7.7 3L9.5 2Z"
          fill="#8f8f8f"
        />
        <circle cx="12" cy="12" r="4" fill="#f0f0f0" />
      </svg>
    </footer>
  );
}

export default function App() {
  return (
    <div className="flex h-[1344px] w-[2256px] flex-col overflow-hidden bg-white font-['Liberation_Sans',Arial,sans-serif] blur-[0.5px]">
      <Toolbar />
      <main className="relative flex-1">
        <Model />
        <Browser />
        <Comments />
        <Extrude />
        <NavBar />
        <Dimension />
        <div className="absolute left-[1630px] top-[349px] flex h-[22px] w-[211px] items-center justify-center border-b-2 border-[#c8c8c8] bg-[#f0f0f0] text-[16px] text-[#333]">
          Hold Ctrl to modify selection
        </div>
        <div className="absolute right-[23px] top-[1118px] text-[17px] font-bold text-[#555]">5 Profiles</div>
      </main>
      <Timeline />
    </div>
  );
}
